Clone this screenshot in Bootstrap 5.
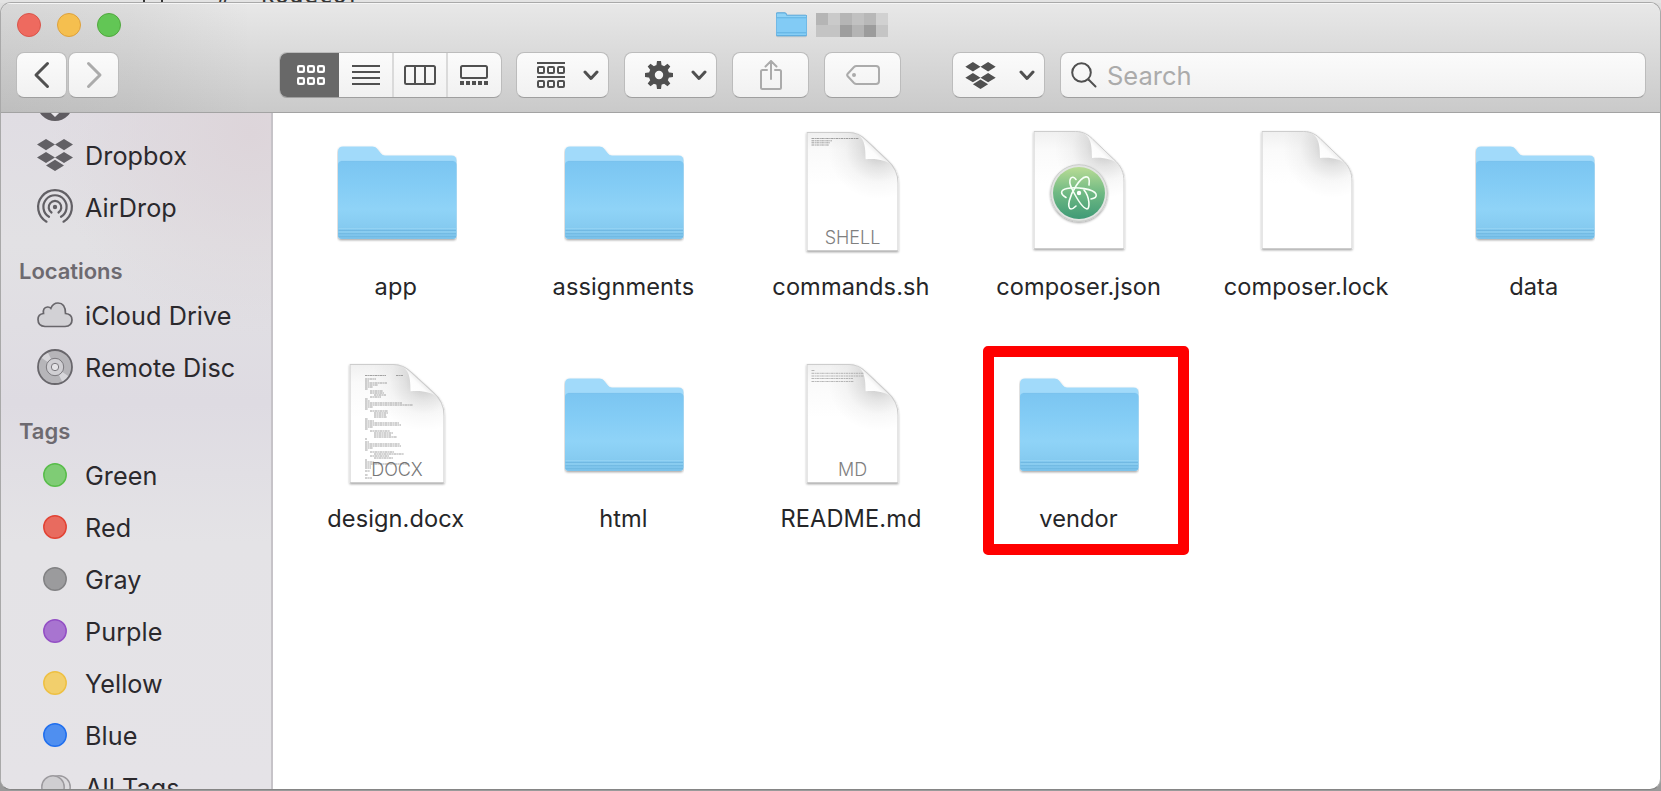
<!DOCTYPE html>
<html lang="en">
<head>
<meta charset="utf-8">
<meta name="viewport" content="width=device-width, initial-scale=1">
<title>Finder</title>
<link href="https://cdn.jsdelivr.net/npm/bootstrap@5.3.0/dist/css/bootstrap.min.css" rel="stylesheet">
<style>
  body{height:791px;overflow:hidden;background:#8f8f8f;font-family:Inter,"Liberation Sans",sans-serif;color:#262628}
  svg{display:block;flex:none}
  .backdrop-top{height:3px;background:#e3e3e3;overflow:hidden;font:24px/24px "DejaVu Sans Mono",monospace;color:#333;white-space:pre}
  .backdrop-top span{margin-top:-17px;padding-left:217px}
  .backdrop-top .slab{width:2px;height:3px;background:#333;left:143px;top:0;box-shadow:18px 0 #333}
  .desk{background:linear-gradient(#dedede 0 20px,#9a9a9a 60px)}
  .finder{height:788px;margin-top:-1px;border:1px solid #a9a9a9;border-bottom-color:#858585;border-radius:11px;background:#fff}
  .titlebar{height:110px;border-bottom:1px solid #a3a3a3;background:linear-gradient(90deg,rgba(110,110,110,.13),rgba(110,110,110,.09) 130px,transparent 250px),linear-gradient(#e8e8e8,#cacaca);box-shadow:inset 0 1px #f6f6f6;flex:none}
  .light{width:24px;height:24px;border-radius:50%;border:1px solid}
  .l-red{background:#ee6a5f;border-color:#d9544a}.l-yel{background:#f5bf4f;border-color:#dda03c}.l-grn{background:#62c655;border-color:#51a73e}
  .title-row{height:43px;padding-left:16px}
  .lights{gap:16px;width:759px}
  .mosaic{display:grid;grid-template-columns:repeat(6,12px);grid-auto-rows:12px;margin-left:9px}
  .tools{padding:6px 14px 0 15px}
  .tool{height:46px;border:1px solid #bcbcbc;border-bottom-color:#9f9f9f;border-radius:8px;background:linear-gradient(#fbfbfb,#f1f1f1);padding:0;display:flex;align-items:center;color:#505050;flex:none;overflow:hidden}
  .w50{width:51px}.w76{width:77px}.w93{width:93px}
  .seg{width:223px}
  .seg>div{height:46px;display:flex;align-items:center;justify-content:center;border-left:2px solid #dadada;width:54px}
  .seg>.picked{width:59px;border:0;background:#686868;color:#fff}
  .seg>.picked+div{border:0;width:53px}
  .pale{color:#ababab}
  .find{font-size:25.5px;color:#ababab;padding-top:2px}
  .side{width:272px;border-right:2px solid #c6c3c8;overflow:hidden;flex:none;color:#2b292d;background:radial-gradient(circle at 250px 20px,#ddd5da 0,rgba(221,213,218,0) 200px),linear-gradient(#e0dde3,#e2e1e4 130px,#dedbe2 290px,#e4e3e6 430px,#e5e3e7)}
  .side ul{margin-top:-36px}
  .side li{height:52px;padding-left:33px;font-size:25.2px;letter-spacing:.08px;white-space:nowrap;line-height:30px}
  .side li svg{margin-right:9px}
  .side li span{padding-top:2px}
  .side .group-name{height:36px;margin-top:20px;padding-left:18px;font-size:22px;font-weight:600;color:#6d6a70;letter-spacing:-.05px}
  .files{display:grid;grid-template-columns:repeat(6,227.6px);grid-auto-rows:232.4px;padding-left:9px;align-content:start}
  .file{padding-top:18px}
  .file svg{margin-left:2px;overflow:visible}
  .file-name{font-size:23.6px;line-height:30px;margin-top:21px;letter-spacing:.1px}
  .marked{width:206px;height:209px;border:11px solid #f00;border-radius:5px;top:1px;left:18px}
</style>
</head>
<body class="desk">
<svg width="0" height="0" class="position-absolute">
  <defs>
    <linearGradient id="gFront" x2="0" y2="1"><stop stop-color="#7bc5f1"/><stop offset=".3" stop-color="#83ccf5"/><stop offset=".62" stop-color="#8fd3f7"/><stop offset=".8" stop-color="#88cdf2"/><stop offset="1" stop-color="#7cc2ea"/></linearGradient>
    <linearGradient id="gPage" x2="0" y2="1"><stop stop-color="#f0f0f0"/><stop offset=".16" stop-color="#fafafa"/><stop offset=".45" stop-color="#fff"/></linearGradient>
    <linearGradient id="gFold" gradientUnits="userSpaceOnUse" x1="58" y1="28" x2="71" y2="15"><stop stop-color="#fff"/><stop offset=".6" stop-color="#fcfcfc"/><stop offset="1" stop-color="#e2e2e2"/></linearGradient>
    <radialGradient id="gShade" gradientUnits="userSpaceOnUse" cx="71" cy="17" r="50"><stop offset=".1" stop-color="#000" stop-opacity=".2"/><stop offset=".36" stop-color="#000" stop-opacity=".1"/><stop offset=".65" stop-color="#000" stop-opacity=".03"/><stop offset="1" stop-color="#000" stop-opacity="0"/></radialGradient>
    <linearGradient id="gAtom" x2="0" y2="1"><stop stop-color="#b9dc95"/><stop offset=".5" stop-color="#6fb983"/><stop offset="1" stop-color="#3f9a76"/></linearGradient>
    <filter id="drop" x="-10%" y="-10%" width="120%" height="125%"><feDropShadow dx="0" dy="1.2" stdDeviation="1" flood-opacity=".36"/></filter>
  </defs>
  <symbol id="folder" viewBox="0 0 120 120">
    <g filter="url(#drop)">
      <path d="M1 104V20.500q0-5 5-5h29.500q3 0 4.500 2l4 5q1.500 2 4 2H114.500q5 0 5 5V104q0 4-4 4H5q-4 0-4-4Z" fill="#a1dafa"/>
      <path d="M1 104V34q0-4 4-4H115.500q4 0 4 4V104q0 4-4 4H5q-4 0-4-4Z" fill="url(#gFront)"/>
    </g>
    <path d="M4 30.300H116.500" stroke="#77bde8" stroke-width=".8" opacity=".6"/>
    <path d="M1.500 99.500H119M1.500 102.700H119M1.500 105.700H119" stroke="#66b0dc" stroke-width="1" opacity=".6"/>
    <path d="M1.500 97.500H119M1.500 101H119" stroke="#a0d9f6" stroke-width=".8" opacity=".7"/>
  </symbol>
  <symbol id="page" viewBox="0 0 91 118" preserveAspectRatio="none">
    <path d="M0 0H42C50 0 55 4 59 8L80 28C88 35 91 42 91 51V118H0Z" fill="url(#gPage)"/>
    <path d="M0 0H42C50 0 55 4 59 8L80 28C88 35 91 42 91 51V118H0Z" fill="url(#gShade)"/>
    <path d="M46 .5C56 4 58.500 10 58.500 27C70 26 79 28 85 33.500L59 8C55 4 50 .5 46 .5Z" fill="url(#gFold)"/>
    <path d="M.5 .5H42C50 .5 55 4 59 8L80 28C88 35 90.500 42 90.500 51V117.500H.5Z" fill="none" stroke="#cdcdcd" stroke-width="1"/>
  </symbol>
  <symbol id="dropbox" viewBox="0 0 36 32">
    <path fill="currentColor" d="M9 0 18 5.600 9 11.200 0 5.600ZM27 0 36 5.600 27 11.200 18 5.600ZM9 13 18 18.600 9 24 0 18.600ZM27 13 36 18.600 27 24 18 18.600ZM18 20.800 27 26.400 18 32 9 26.400Z"/>
  </symbol>
  <symbol id="down" viewBox="0 0 16 12"><path d="M2 3 8 9.500 14 3" fill="none" stroke="currentColor" stroke-width="3" stroke-linecap="round" stroke-linejoin="round"/></symbol>
</svg>

<div class="backdrop-top d-flex position-relative"><i class="slab position-absolute"></i><span>#  kodecor</span></div>

<div class="finder d-flex flex-column overflow-hidden position-relative">
  <header class="titlebar">
    <div class="title-row d-flex align-items-center">
      <div class="lights d-flex"><i class="light l-red"></i><i class="light l-yel"></i><i class="light l-grn"></i></div>
      <svg width="31" height="31" viewBox="0 0 120 120"><g filter="url(#drop)"><path d="M1 98V20q0-5 5-5H34q5 0 8 9H115q4 0 4 4V98q0 5-4 5H5q-4 0-4-5Z" fill="#8fd2f6" stroke="#62afe0" stroke-width="4"/><path d="M3 34H117V99H3Z" fill="#82cbf5"/><path d="M3 34H117M3 92H117" stroke="#62b2e2" stroke-width="4"/></g></svg>
      <div class="mosaic">
        <i style="background:#b5b5b5"></i><i style="background:#cacaca"></i><i style="background:#b5b5b5"></i><i style="background:#c1c1c1"></i><i style="background:#b8b8b8"></i><i style="background:#d1d1d1"></i>
        <i style="background:#c4c4c4"></i><i style="background:#c4c4c4"></i><i style="background:#9e9e9e"></i><i style="background:#b4b4b4"></i><i style="background:#9c9c9c"></i><i style="background:#c5c5c5"></i>
      </div>
    </div>
    <div class="tools d-flex">
      <button class="tool w50 justify-content-center"><svg width="18" height="28" viewBox="0 0 18 28" fill="none" stroke="currentColor" stroke-width="3" stroke-linecap="round" stroke-linejoin="round"><path d="M14.500 2.500 3 14 14.500 25.500"/></svg></button>
      <button class="tool w50 justify-content-center pale" style="margin-left:1px"><svg width="18" height="28" viewBox="0 0 18 28" fill="none" stroke="currentColor" stroke-width="3" stroke-linecap="round" stroke-linejoin="round"><path d="M3.500 2.500 15 14 3.500 25.500"/></svg></button>
      <div class="tool seg" style="margin-left:160px">
        <div class="picked"><svg width="28" height="20" viewBox="0 0 28 20" fill="none" stroke="currentColor" stroke-width="2.200" style="margin-left:2px"><rect x="1.100" y="1.100" width="5.800" height="5.800" rx="1"/><rect x="11.100" y="1.100" width="5.800" height="5.800" rx="1"/><rect x="21.100" y="1.100" width="5.800" height="5.800" rx="1"/><rect x="1.100" y="13.100" width="5.800" height="5.800" rx="1"/><rect x="11.100" y="13.100" width="5.800" height="5.800" rx="1"/><rect x="21.100" y="13.100" width="5.800" height="5.800" rx="1"/></svg></div>
        <div><svg width="28" height="20" viewBox="0 0 28 20" stroke="currentColor" stroke-width="2"><path d="M0 1H28M0 7H28M0 13H28M0 19H28"/></svg></div>
        <div><svg width="32" height="20" viewBox="0 0 32 20" fill="none" stroke="currentColor" stroke-width="2"><rect x="1" y="1" width="30" height="18" rx="1.500"/><path d="M11 1V19M21 1V19"/></svg></div>
        <div><svg width="28" height="20" viewBox="0 0 28 20" fill="none" stroke="currentColor" stroke-width="2"><rect x="1" y="1" width="26" height="12" rx="1.500"/><path d="M0 18H28" stroke-width="4" stroke-dasharray="4 2"/></svg></div>
      </div>
      <button class="tool w93" style="margin-left:14px"><svg width="28" height="26" viewBox="0 0 28 26" fill="none" stroke="currentColor" stroke-width="2" style="margin-left:20px"><path d="M0 1H28M0 15H28"/><rect x="1" y="5" width="6" height="6" rx="1"/><rect x="11" y="5" width="6" height="6" rx="1"/><rect x="21" y="5" width="6" height="6" rx="1"/><rect x="1" y="19" width="6" height="6" rx="1"/><rect x="11" y="19" width="6" height="6" rx="1"/><rect x="21" y="19" width="6" height="6" rx="1"/></svg><svg width="16" height="12" style="margin-left:18px"><use href="#down"/></svg></button>
      <button class="tool w93" style="margin-left:15px"><svg width="28" height="28" viewBox="-14 -14 28 28" style="margin-left:20px"><circle r="7.200" fill="none" stroke="currentColor" stroke-width="6"/><g fill="currentColor"><path id="cog" d="M-2.700-9-2-14H2L2.700-9ZM-2.700 9-2 14H2L2.700 9Z"/><use href="#cog" transform="rotate(45)"/><use href="#cog" transform="rotate(90)"/><use href="#cog" transform="rotate(135)"/></g></svg><svg width="16" height="12" style="margin-left:18px"><use href="#down"/></svg></button>
      <button class="tool w76 justify-content-center pale" style="margin-left:15px"><svg width="22" height="30" viewBox="0 0 22 30" fill="none" stroke="currentColor" stroke-width="2" stroke-linecap="round"><path d="M7 10H2.500Q1 10 1 11.500V27.500Q1 29 2.500 29H19.500Q21 29 21 27.500V11.500Q21 10 19.500 10H15M11 19V1.500M5.500 6.500 11 1 16.500 6.500"/></svg></button>
      <button class="tool w76 justify-content-center pale" style="margin-left:15px"><svg width="34" height="20" viewBox="0 0 34 20" fill="none" stroke="currentColor" stroke-width="2"><path d="M10.500 1H30Q33 1 33 4V16Q33 19 30 19H10.500Q9 19 8 18L1.500 11Q.8 10 1.500 9L8 2Q9 1 10.500 1Z"/><circle cx="8" cy="10" r="2" fill="currentColor" stroke="none"/></svg></button>
      <button class="tool w93" style="margin-left:51px"><svg width="31" height="27" style="margin-left:12px"><use href="#dropbox"/></svg><svg width="16" height="12" style="margin-left:23px"><use href="#down"/></svg></button>
      <div class="tool flex-grow-1" style="margin-left:15px"><svg width="26" height="26" viewBox="0 0 26 26" fill="none" stroke="currentColor" stroke-width="2" stroke-linecap="round" style="margin-left:10px"><circle cx="10.500" cy="10.500" r="9.300"/><path d="M17.500 17.500 24.500 24.500"/></svg><span class="find" style="margin-left:10px">Search</span></div>
    </div>
  </header>

  <div class="d-flex flex-grow-1 overflow-hidden">
    <nav class="side">
      <ul class="list-unstyled mb-0">
        <li class="d-flex align-items-center"><svg width="42" height="42" viewBox="-21 -21 42 42"><circle r="18" fill="#5f5c61"/><path d="M0-9V9M-7 5 0 12 7 5" fill="none" stroke="#e8e6ea" stroke-width="3"/></svg><span>Downloads</span></li>
        <li class="d-flex align-items-center"><svg width="42" height="32" viewBox="-3 0 42 32" color="#626065"><use href="#dropbox" width="36" height="32"/></svg><span>Dropbox</span></li>
        <li class="d-flex align-items-center"><svg width="42" height="42" viewBox="-21 -21 42 42" fill="none" stroke="#626065" stroke-width="2.200" stroke-linecap="round"><circle r="2.200" fill="#626065" stroke="none"/><path d="M-3.500 5.500A6.300 6.300 0 1 1 3.500 5.500M-6 9.800A11.600 11.600 0 1 1 6 9.800M-8.500 14.700A16.900 16.900 0 1 1 8.500 14.700"/></svg><span>AirDrop</span></li>
        <li class="d-flex align-items-center group-name">Locations</li>
        <li class="d-flex align-items-center"><svg width="42" height="26" viewBox="-3 0 42 26"><path d="M8 24.500Q1 24 1 17.500Q1 12 6.500 11.500Q5.500 5.500 10.500 5Q12.500 4.800 13.800 6.300Q16 1 21 1Q28.500 1 28.500 11.500Q35 12 35 18Q35 24 28 24.500Z" fill="#d2d1d5" stroke="#68666b" stroke-width="1.700"/></svg><span>iCloud Drive</span></li>
        <li class="d-flex align-items-center"><svg width="42" height="42" viewBox="-21 -21 42 42"><circle r="17" fill="#b6b5b9"/><path d="M0 0-14-9.500A17 17 0 0 1-7.500-15.200ZM0 0 14 9.500A17 17 0 0 1 7.500 15.200Z" fill="#d7d6da"/><circle r="17" fill="none" stroke="#68666b" stroke-width="1.800"/><circle r="8.700" fill="#d0cfd3" stroke="#7b797e" stroke-width="1"/><circle r="3.700" fill="#e4e3e6" stroke="#7b797e" stroke-width="1"/></svg><span>Remote Disc</span></li>
        <li class="d-flex align-items-center group-name">Tags</li>
        <li class="d-flex align-items-center"><svg width="42" height="26" viewBox="-21 -13 42 26"><circle r="11.200" fill="#7fcc75" stroke="#58bd4a" stroke-width="1.500"/></svg><span>Green</span></li>
        <li class="d-flex align-items-center"><svg width="42" height="26" viewBox="-21 -13 42 26"><circle r="11.200" fill="#e86b5f" stroke="#e24334" stroke-width="1.500"/></svg><span>Red</span></li>
        <li class="d-flex align-items-center"><svg width="42" height="26" viewBox="-21 -13 42 26"><circle r="11.200" fill="#9b9b9d" stroke="#828284" stroke-width="1.500"/></svg><span>Gray</span></li>
        <li class="d-flex align-items-center"><svg width="42" height="26" viewBox="-21 -13 42 26"><circle r="11.200" fill="#a874d0" stroke="#934fc5" stroke-width="1.500"/></svg><span>Purple</span></li>
        <li class="d-flex align-items-center"><svg width="42" height="26" viewBox="-21 -13 42 26"><circle r="11.200" fill="#f2cf6c" stroke="#eec043" stroke-width="1.500"/></svg><span>Yellow</span></li>
        <li class="d-flex align-items-center"><svg width="42" height="26" viewBox="-21 -13 42 26"><circle r="11.200" fill="#4f8ff0" stroke="#206fee" stroke-width="1.500"/></svg><span>Blue</span></li>
        <li class="d-flex align-items-center"><svg width="42" height="26" viewBox="-21 -13 42 26" stroke="#9c9a9e" stroke-width="1.500"><circle cx="4" r="11.200" fill="#dcdbde"/><circle cx="-2" r="11.200" fill="#cfced1"/></svg><span>All Tags</span></li>
      </ul>
    </nav>

    <main class="files">
      <div class="file d-flex flex-column align-items-center"><svg width="120" height="120"><use href="#folder"/></svg><div class="file-name">app</div></div>
      <div class="file d-flex flex-column align-items-center"><svg width="120" height="120"><use href="#folder"/></svg><div class="file-name">assignments</div></div>
      <div class="file d-flex flex-column align-items-center"><svg width="120" height="120" viewBox="0 0 120 120"><g filter="url(#drop)"><use href="#page" x="14.500" y="1" width="92" height="119"/></g><path d="M19.500 7.500H67M19.500 9.800H40M19.500 11.800H38M19.500 14H37" stroke="#888" stroke-width=".8" stroke-dasharray="2.500 .6 1.300 .5"/><text x="60.500" y="113" text-anchor="middle" font-size="18" fill="#808080" font-weight="300">SHELL</text></svg><div class="file-name">commands.sh</div></div>
      <div class="file d-flex flex-column align-items-center"><svg width="120" height="120" viewBox="0 0 120 120"><g filter="url(#drop)"><use href="#page" x="13.500" y="0" width="91" height="118"/></g><g transform="translate(59 62)"><g filter="url(#drop)"><circle r="28.300" fill="#e2e4e2" stroke="#c5c8c5" stroke-width=".8"/></g><circle r="26" fill="url(#gAtom)"/><g fill="none" stroke="#f6fff6" stroke-width="1.600" stroke-linecap="round"><path d="M-13 4.500C-19 1-19-3-12-4.500C-3-6.500 15-4 17 1C18 4 16 5.500 12 6"/><path d="M-3-13.500C-7-19-12-14-7-4C-3 4 3 15 8 16C11 16 11 4 5-3"/><path d="M10-8C12-20 4-18-3-7C-9 2-13 15-8 16C-6.500 16-5 15-3 13"/></g><circle r="2.200" fill="#fff"/></g></svg><div class="file-name">composer.json</div></div>
      <div class="file d-flex flex-column align-items-center"><svg width="120" height="120" viewBox="0 0 120 120"><g filter="url(#drop)"><use href="#page" x="14.500" y="0" width="91" height="118"/></g></svg><div class="file-name">composer.lock</div></div>
      <div class="file d-flex flex-column align-items-center"><svg width="120" height="120"><use href="#folder"/></svg><div class="file-name">data</div></div>

      <div class="file d-flex flex-column align-items-center"><svg width="120" height="120" viewBox="0 0 120 120"><g filter="url(#drop)"><use href="#page" x="12.500" y="1" width="95" height="119"/></g><path d="M28 12.500H49M59 12.500H66M28 16H39M28 18H32M28 20H50M28 22H41M28 24H36M28 26H31M33 28H46M33 30H47M37 32H49M33 34H44M28 36H31M28 38H33M28 40H65M28 42H76M28 44H36M28 46H31M33 48H51M37 50H51M37 52H49M37 54H50M28 56H31M28 58H37M28 60H62M28 62H64M28 64H36M28 66H31M33 68H53M37 70H56M37 72H54M37 74H60M28 76H30M28 79H32M28 81H63M28 83H64M28 85H36M28 87H31M33 89H57M37 91H67M33 93H52M37 95H56M28 97H30M28 99H37M28 101H72M28 103H34M28 105H34M28 108H33M28 112H31M28 115H35" stroke="#8a8a8a" stroke-width=".8" stroke-dasharray="2.600 .5 1.500 .4"/><text x="60" y="113" text-anchor="middle" font-size="18" fill="#777" font-weight="300">DOCX</text></svg><div class="file-name">design.docx</div></div>
      <div class="file d-flex flex-column align-items-center"><svg width="120" height="120"><use href="#folder"/></svg><div class="file-name">html</div></div>
      <div class="file d-flex flex-column align-items-center"><svg width="120" height="120" viewBox="0 0 120 120"><g filter="url(#drop)"><use href="#page" x="14.500" y="1" width="92" height="119"/></g><path d="M19.500 7.500H23M19.500 10.300H72M19.500 13H72M19.500 15.500H61M19.500 18.500H62" stroke="#a5a5a5" stroke-width=".8" stroke-dasharray="2.500 .6 1.300 .5"/><text x="60.500" y="113" text-anchor="middle" font-size="18" fill="#808080" font-weight="300">MD</text></svg><div class="file-name">README.md</div></div>
      <div class="file d-flex flex-column align-items-center position-relative"><div class="marked position-absolute"></div><svg width="120" height="120" style="margin-left:1px"><use href="#folder"/></svg><div class="file-name">vendor</div></div>
    </main>
  </div>
</div>
<script src="https://cdn.jsdelivr.net/npm/bootstrap@5.3.0/dist/js/bootstrap.bundle.min.js"></script>
</body>
</html>
